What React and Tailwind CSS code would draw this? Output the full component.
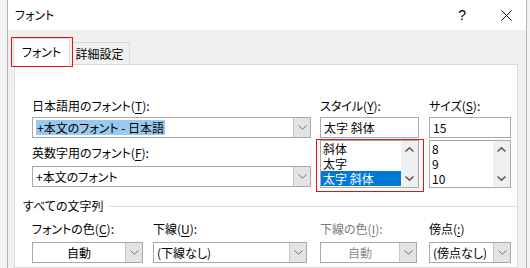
import React from "react";

const jp = "font-['Noto_Sans_CJK_JP',sans-serif] [font-feature-settings:'palt']";

const Chevron = ({ up, dark }) => (
  <svg width="9" height="5" viewBox="0 0 9 5" className="block">
    <path
      d={up ? "M0.5 4.5 L4.5 0.8 L8.5 4.5" : "M0.5 0.5 L4.5 4.2 L8.5 0.5"}
      fill="none"
      stroke={dark ? "#505050" : "#707070"}
      strokeWidth={dark ? "1.4" : "1"}
    />
  </svg>
);

// mnemonic label, e.g. 日本語用のフォント(T):
const Label = ({ text, k, tail = "):", gray }) => (
  <div className={`h-[14px] leading-[14px] text-[12px] whitespace-nowrap ${gray ? "text-[#7a7a7a]" : "text-black"}`}>
    {text}(<span className="underline underline-offset-2">{k}</span>{tail}
  </div>
);

const Combo = ({ width, children, center, disabled }) => (
  <div className={`flex h-[21px] border border-[#a9a9a9] bg-white ${width}`}>
    <div
      className={`flex flex-1 items-center min-w-0 text-[12px] whitespace-nowrap ${
        center ? "justify-center" : "pl-[3px]"
      } ${disabled ? "text-[#8c8c8c]" : "text-black"}`}
    >
      {children}
    </div>
    <div className="w-[17px] bg-[#e3e3e3] border-l border-[#c8c8c8] flex items-center justify-center">
      <Chevron />
    </div>
  </div>
);

const ListBox = ({ items, selected }) => (
  <div className="mt-[2px] flex h-[48px] border border-[#a9a9a9] bg-white">
    <div className="flex-1 flex flex-col">
      {items.map((it) => (
        <div
          key={it}
          className={`h-[15px] leading-[15px] text-[12px] pl-[2px] whitespace-nowrap overflow-hidden ${
            it === selected ? "bg-[#0078d7] text-white" : "text-black"
          }`}
        >
          {it}
        </div>
      ))}
    </div>
    <div className="w-[17px] bg-[#f0f0f0] flex flex-col items-center justify-between py-[6px]">
      <Chevron up dark />
      <Chevron dark />
    </div>
  </div>
);

export default function App() {
  return (
    <div className={`w-[530px] h-[268px] overflow-hidden flex bg-[#f3f3f3] ${jp}`}>
      <div className="w-[7px]" />
      <div className="w-[520px] h-full flex flex-col border-x border-[#b4b4b4] bg-[#f0f0f0]">
        {/* title bar */}
        <div className="h-[30px] bg-white flex items-center pl-[7px] pr-[14px]">
          <span className="text-[12px] text-black">フォント</span>
          <span className="ml-auto text-[14px] font-['Liberation_Sans',sans-serif] text-black">?</span>
          <svg width="11" height="11" viewBox="0 0 11 11" className="ml-[35px]">
            <path d="M0.5 0.5 L10.5 10.5 M10.5 0.5 L0.5 10.5" stroke="#111" strokeWidth="1" />
          </svg>
        </div>

        {/* tabs */}
        <div className="pt-[8px] pl-[5px] flex items-end">
          <div className="relative z-10 -mb-px w-[57px] h-[27px] bg-white border border-b-0 border-[#d9d9d9] flex items-center justify-center text-[12px] text-black">
            フォント
            <div className="absolute -left-[3px] -right-[4px] -top-[2px] -bottom-[2px] border border-[#e81010]" />
          </div>
          <div className="w-[60px] h-[22px] bg-[#f0f0f0] border border-b-0 border-l-0 border-[#d9d9d9] flex items-center justify-center text-[12px] text-black">
            詳細設定
          </div>
        </div>

        {/* panel */}
        <div className="ml-[6px] w-[504px] flex-1 bg-white border border-[#d9d9d9] pl-[8px] pt-[34px]">
          <div className="flex ml-[9px]">
            <div className="w-[279px]">
              <Label text="日本語用のフォント" k="T" />
              <div className="mt-[4px]">
                <Combo width="w-full">
                  <span className="bg-[#99c9ef] px-[1px] leading-[15px]">+本文のフォント - 日本語</span>
                </Combo>
              </div>
              <div className="mt-[8px]">
                <Label text="英数字用のフォント" k="F" />
              </div>
              <div className="mt-[6px]">
                <Combo width="w-full">+本文のフォント</Combo>
              </div>
            </div>

            <div className="ml-[9px] w-[99px]">
              <Label text="スタイル" k="Y" />
              <div className="mt-[4px] h-[21px] border border-[#a9a9a9] flex items-center pl-[3px] text-[12px] text-black">
                太字 斜体
              </div>
              <div className="relative">
                <ListBox items={["斜体", "太字", "太字 斜体"]} selected="太字 斜体" />
                <div className="absolute -left-[4px] -right-[5px] -top-[1px] -bottom-[4px] border border-[#e81010]" />
              </div>
            </div>

            <div className="ml-[10px] w-[82px]">
              <Label text="サイズ" k="S" />
              <div className="mt-[4px] h-[21px] border border-[#a9a9a9] flex items-center pl-[3px] text-[12px] text-black">
                15
              </div>
              <ListBox items={["8", "9", "10"]} />
            </div>
          </div>

          {/* section */}
          <div className="mt-[11px] flex items-center">
            <span className="h-[14px] leading-[14px] text-[12px] text-black">すべての文字列</span>
            <div className="ml-[6px] flex-1 h-px bg-[#dcdcdc]" />
          </div>

          <div className="mt-[9px] ml-[9px] flex">
            <div className="w-[111px]">
              <Label text="フォントの色" k="C" />
              <div className="mt-[6px]">
                <Combo width="w-full" center>自動</Combo>
              </div>
            </div>
            <div className="ml-[10px] w-[154px]">
              <Label text="下線" k="U" />
              <div className="mt-[6px]">
                <Combo width="w-full">(下線なし)</Combo>
              </div>
            </div>
            <div className="ml-[13px] w-[97px]">
              <Label text="下線の色" k="I" gray />
              <div className="mt-[6px]">
                <Combo width="w-full" center disabled>自動</Combo>
              </div>
            </div>
            <div className="ml-[12px] w-[82px]">
              <Label text="傍点" k=":" tail=")" />
              <div className="mt-[6px]">
                <Combo width="w-full">(傍点なし)</Combo>
              </div>
            </div>
          </div>
        </div>
      </div>
    </div>
  );
}
